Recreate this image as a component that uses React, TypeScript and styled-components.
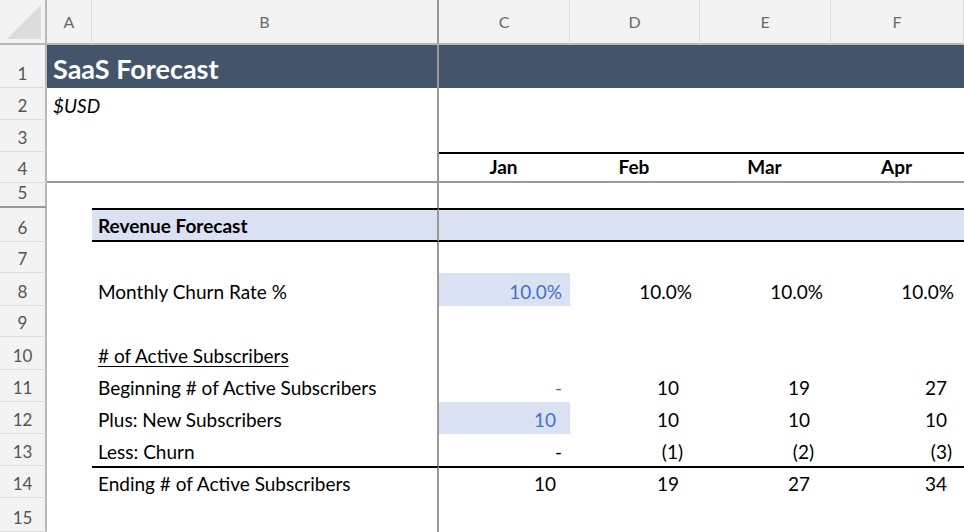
import React from "react";
import styled, { createGlobalStyle } from "styled-components";

const G = createGlobalStyle`
  html,body{margin:0;padding:0;background:#fff;overflow:hidden;}
  body{font-family:Lato,"Open Sans",sans-serif;}
`;

const COLS = [47, 45, 347, 131, 130, 131, 133];
const ROWS = [45, 43, 32, 32, 31, 25, 34, 31, 33, 31, 33, 32, 32, 32, 32, 34];

const Sheet = styled.div`
  display: grid;
  grid-template-columns: ${COLS.map((c) => c + "px").join(" ")};
  grid-template-rows: ${ROWS.map((r) => r + "px").join(" ")};
  width: 964px;
  height: 532px;
  overflow: hidden;
`;

const ColHead = styled.div<{ $split?: boolean }>`
  background: #f3f3f3;
  color: #6a6a6a;
  font-size: 16px;
  display: flex;
  align-items: center;
  justify-content: center;
  border-right: 1px solid #dcdcdc;
  border-bottom: 2px solid #b8b8b8;
  ${(p) => p.$split && "border-right: 2px solid #9a9a9a;"}
  box-sizing: border-box;
`;

const Corner = styled(ColHead)`
  position: relative;
  border-right: 2px solid #b8b8b8;
`;

const Tri = styled.div`
  position: absolute;
  right: 4px;
  bottom: 4px;
  width: 0;
  height: 0;
  border-left: 34px solid transparent;
  border-bottom: 34px solid #dcdcdc;
`;

const RowHead = styled.div<{ $freeze?: boolean }>`
  background: #f3f3f3;
  color: #555;
  font-size: 17px;
  display: flex;
  align-items: flex-end;
  justify-content: center;
  padding-bottom: 3px;
  box-sizing: border-box;
  border-right: 2px solid #b8b8b8;
  border-bottom: 1px solid #dcdcdc;
  ${(p) => p.$freeze && "border-bottom: 2px solid #9a9a9a;"}
`;

const Cell = styled.div<{
  $span?: number;
  $bg?: string;
  $right?: boolean;
  $center?: boolean;
  $bold?: boolean;
  $color?: string;
  $top?: boolean;
  $bottom?: boolean;
  $split?: boolean;
  $freeze?: boolean;
  $pad?: number;
  $size?: number;
  $italic?: boolean;
  $underline?: boolean;
}>`
  grid-column: span ${(p) => p.$span ?? 1};
  background: ${(p) => p.$bg ?? "#fff"};
  color: ${(p) => p.$color ?? "#000"};
  font-size: ${(p) => p.$size ?? 19}px;
  font-weight: ${(p) => (p.$bold ? 700 : 400)};
  font-style: ${(p) => (p.$italic ? "italic" : "normal")};
  text-decoration: ${(p) => (p.$underline ? "underline" : "none")};
  text-underline-offset: 3px;
  display: flex;
  align-items: flex-end;
  justify-content: ${(p) => (p.$right ? "flex-end" : p.$center ? "center" : "flex-start")};
  padding: 0 ${(p) => p.$pad ?? 8}px 3px ${(p) => (p.$right ? 0 : 6)}px;
  box-sizing: border-box;
  white-space: nowrap;
  border-top: ${(p) => (p.$top ? "2px solid #000" : "0")};
  border-bottom: ${(p) => (p.$bottom ? "2px solid #000" : p.$freeze ? "2px solid #9a9a9a" : "0")};
  border-right: ${(p) => (p.$split ? "2px solid #9a9a9a" : "0")};
`;

const Empty = () => <Cell />;

export default function App() {
  const blue = "#4472c4";
  const band = "#d9e1f2";
  return (
    <>
      <G />
      <Sheet>
        <Corner><Tri /></Corner>
        <ColHead>A</ColHead>
        <ColHead $split>B</ColHead>
        <ColHead>C</ColHead>
        <ColHead>D</ColHead>
        <ColHead>E</ColHead>
        <ColHead>F</ColHead>

        <RowHead>1</RowHead>
        <Cell $span={2} $bg="#44546a" $color="#fff" $bold $size={27} $split>SaaS Forecast</Cell>
        <Cell $span={4} $bg="#44546a" />

        <RowHead>2</RowHead>
        <Cell $span={2} $italic $split $size={19}>$USD</Cell>
        <Cell $span={4} />

        <RowHead>3</RowHead>
        <Cell $span={2} $split />
        <Cell $span={4} />

        <RowHead>4</RowHead>
        <Cell $span={2} $split $freeze />
        <Cell $top $bold $center $freeze>Jan</Cell>
        <Cell $top $bold $center $freeze>Feb</Cell>
        <Cell $top $bold $center $freeze>Mar</Cell>
        <Cell $top $bold $center $freeze>Apr</Cell>

        <RowHead $freeze>5</RowHead>
        <Cell $span={2} $split />
        <Cell $span={4} />

        <RowHead>6</RowHead>
        <Empty />
        <Cell $bg={band} $bold $top $bottom $split>Revenue Forecast</Cell>
        <Cell $span={4} $bg={band} $top $bottom />

        <RowHead>7</RowHead>
        <Cell $span={2} $split />
        <Cell $span={4} />

        <RowHead>8</RowHead>
        <Empty />
        <Cell $split>Monthly Churn Rate %</Cell>
        <Cell $right $bg={band} $color={blue}>10.0%</Cell>
        <Cell $right $pad={8}>10.0%</Cell>
        <Cell $right $pad={8}>10.0%</Cell>
        <Cell $right $pad={10}>10.0%</Cell>

        <RowHead>9</RowHead>
        <Cell $span={2} $split />
        <Cell $span={4} />

        <RowHead>10</RowHead>
        <Empty />
        <Cell $split $underline>
          # of Active Subscribers
        </Cell>
        <Cell $span={4} />

        <RowHead>11</RowHead>
        <Empty />
        <Cell $split>Beginning # of Active Subscribers</Cell>
        <Cell $right $color={blue}>-</Cell>
        <Cell $right $pad={21}>10</Cell>
        <Cell $right $pad={21}>19</Cell>
        <Cell $right $pad={17}>27</Cell>

        <RowHead>12</RowHead>
        <Empty />
        <Cell $split>Plus: New Subscribers</Cell>
        <Cell $right $bg={band} $color={blue} $pad={14}>10</Cell>
        <Cell $right $pad={21}>10</Cell>
        <Cell $right $pad={21}>10</Cell>
        <Cell $right $pad={17}>10</Cell>

        <RowHead>13</RowHead>
        <Empty />
        <Cell $split>Less: Churn</Cell>
        <Cell $right>-</Cell>
        <Cell $right $pad={17}>(1)</Cell>
        <Cell $right $pad={17}>(2)</Cell>
        <Cell $right $pad={12}>(3)</Cell>

        <RowHead>14</RowHead>
        <Empty />
        <Cell $split $top>Ending # of Active Subscribers</Cell>
        <Cell $right $top $pad={14}>10</Cell>
        <Cell $right $top $pad={21}>19</Cell>
        <Cell $right $top $pad={21}>27</Cell>
        <Cell $right $top $pad={17}>34</Cell>

        <RowHead>15</RowHead>
        <Cell $span={2} $split />
        <Cell $span={4} />
      </Sheet>
    </>
  );
}
